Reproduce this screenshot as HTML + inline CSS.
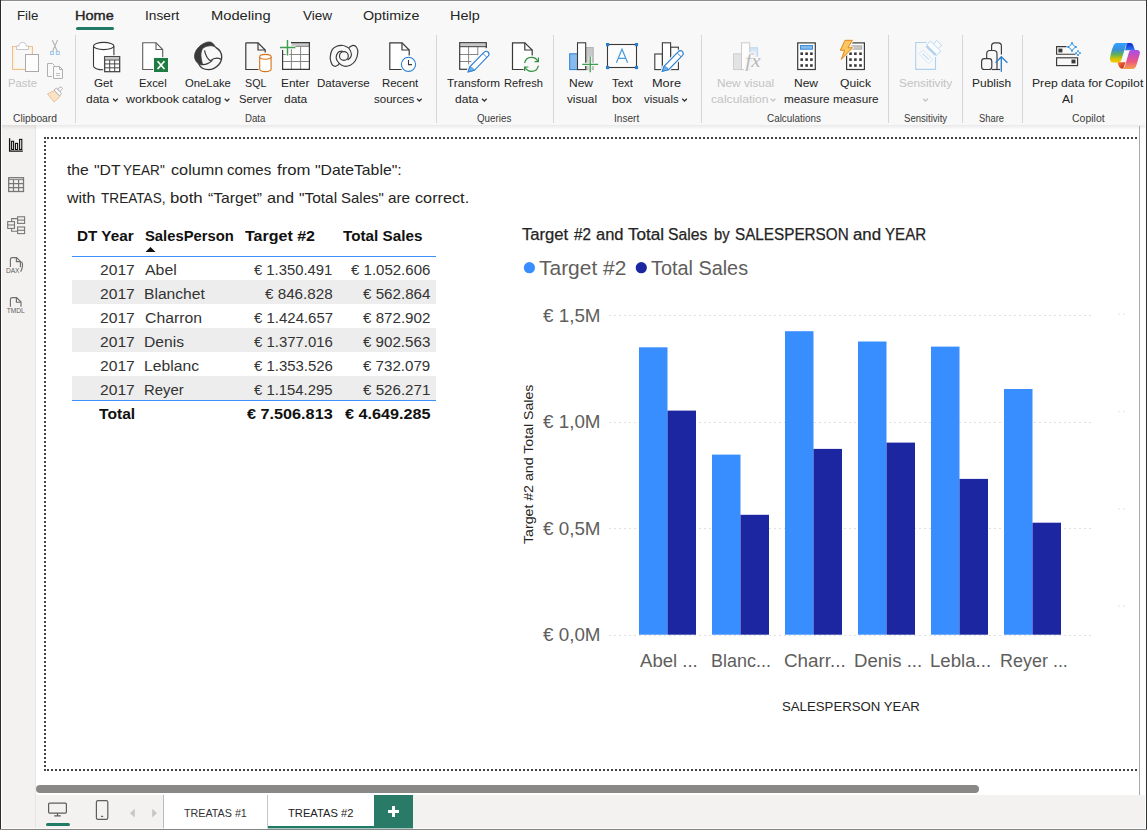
<!DOCTYPE html>
<html><head><meta charset="utf-8"><title>Power BI</title>
<style>
html,body{margin:0;padding:0;}
body{width:1147px;height:830px;overflow:hidden;position:relative;background:#fff;font-family:"Liberation Sans",sans-serif;}
.a{position:absolute;}
.t{position:absolute;white-space:pre;line-height:30px;transform-origin:0 0;font-family:"Liberation Sans",sans-serif;}
#ribbon{left:0;top:0;width:1147px;height:125px;background:#f8f8f8;}
.sep{position:absolute;top:35px;height:88px;width:1px;background:#d6d6d6;}
#nav{left:0;top:125px;width:36px;height:705px;background:#f3f2f1;}
#status{left:36px;top:795px;width:1111px;height:35px;background:#f3f2f1;}
.row{position:absolute;left:72px;width:364px;height:24px;}
.g{background:#ededed;}
.chev{position:absolute;}

</style></head>
<body>
<div id="ribbon" class="a"></div>
<div class="a" style="left:76px;top:27px;width:38px;height:3px;background:#217a66;border-radius:1.5px;"></div>
<div class="sep" style="left:75px"></div>
<div class="sep" style="left:436px"></div>
<div class="sep" style="left:553px"></div>
<div class="sep" style="left:701px"></div>
<div class="sep" style="left:888px"></div>
<div class="sep" style="left:962px"></div>
<div class="sep" style="left:1022px"></div>
<div id="nav" class="a"></div>
<div class="a" style="left:35px;top:126px;width:1px;height:704px;background:#e6e5e4;"></div>
<div id="status" class="a"></div>
<div class="a" style="left:2px;top:125px;width:1143px;height:5px;background:linear-gradient(rgba(0,0,0,0.085),rgba(0,0,0,0));"></div>
<!-- page dotted border -->
<div class="a" style="left:47px;top:137px;width:1090px;height:2px;background:repeating-linear-gradient(90deg,#444 0 2px,transparent 2px 4px);"></div>
<div class="a" style="left:47px;top:769px;width:1090px;height:2px;background:repeating-linear-gradient(90deg,#444 0 2px,transparent 2px 4px);"></div>
<div class="a" style="left:44px;top:141px;width:2px;height:626px;background:repeating-linear-gradient(180deg,#444 0 2px,transparent 2px 4px);"></div>
<div class="a" style="left:44px;top:137px;width:2px;height:2px;background:#444;"></div>
<div class="a" style="left:44px;top:769px;width:2px;height:2px;background:#444;"></div>
<div class="a" style="left:1139px;top:126px;width:1px;height:669px;background:#aaa8a6;"></div>
<!-- scrollbar -->
<div class="a" style="left:36px;top:785px;width:943px;height:8px;border-radius:4px;background:#8a8886;"></div>
<!-- page tabs -->
<div class="a" style="left:164px;top:795px;width:210px;height:34px;background:#fff;"></div>
<div class="a" style="left:163px;top:795px;width:1px;height:34px;background:#bdbbb9;"></div>
<div class="a" style="left:267px;top:795px;width:1px;height:34px;background:#c8c6c4;"></div>
<div class="a" style="left:268px;top:826px;width:106px;height:3px;background:#217a66;"></div>
<div class="a" style="left:374px;top:795px;width:39px;height:34px;background:#2a7a68;"></div>
<div class="a" style="left:388px;top:810px;width:11px;height:3px;background:#fff;"></div>
<div class="a" style="left:392px;top:806px;width:3px;height:11px;background:#fff;"></div>
<div class="a" style="left:46px;top:822.5px;width:24px;height:3px;border-radius:1.5px;background:#217a66;"></div>
<!-- table -->
<div class="a" style="left:72px;top:256px;width:364px;height:1px;background:#3a90ff;"></div>
<div class="row" style="top:257px"></div>
<div class="row g" style="top:280px"></div>
<div class="row g" style="top:328px"></div>
<div class="row g" style="top:376px"></div>
<div class="a" style="left:72px;top:400px;width:364px;height:1px;background:#3a90ff;"></div>
<svg class="a" style="left:145px;top:246px" width="12" height="7" viewBox="0 0 12 7"><path d="M0.5 6 L5.5 1 L10.5 6 Z" fill="#111"/></svg>
<!-- window borders -->
<div class="a" style="left:0;top:1px;width:1147px;height:1px;background:#fff;"></div>
<div class="a" style="left:1px;top:0;width:1px;height:830px;background:#fff;"></div>
<div class="a" style="left:1145px;top:0;width:1px;height:830px;background:#fdfdfd;"></div>
<div class="a" style="left:0;top:0;width:1147px;height:1px;background:#8c8c8c;"></div>
<div class="a" style="left:0;top:0;width:1px;height:830px;background:#2b2b2b;"></div>
<div class="a" style="left:1146px;top:0;width:1px;height:830px;background:#333;"></div>
<div class="a" style="left:2px;top:828px;width:1143px;height:1px;background:rgba(255,255,255,0.6);"></div>
<div class="a" style="left:0;top:829px;width:1147px;height:1px;background:#858585;"></div>
<svg class="a" style="left:500px;top:210px" width="640" height="540" viewBox="500 210 640 540">
<g stroke="#e0e0e0" stroke-width="1" stroke-dasharray="2 3">
<line x1="609" x2="1091" y1="315.5" y2="315.5"/>
<line x1="609" x2="1091" y1="422.5" y2="422.5"/>
<line x1="609" x2="1091" y1="528.5" y2="528.5"/>
<line x1="609" x2="1091" y1="635.5" y2="635.5"/>
</g>
<g fill="#efefef">
<rect x="1118" y="313.3" width="2" height="1.8"/><rect x="1123" y="313.3" width="2" height="1.8"/>
<rect x="1118" y="410.6" width="2" height="1.8"/><rect x="1123" y="410.6" width="2" height="1.8"/>
<rect x="1118" y="508" width="2" height="1.8"/><rect x="1123" y="508" width="2" height="1.8"/>
<rect x="1118" y="605.4" width="2" height="1.8"/><rect x="1123" y="605.4" width="2" height="1.8"/>
</g>
<g fill="#388eff">
<rect x="639" y="347.3" width="28.5" height="287.4"/>
<rect x="712" y="454.6" width="28.5" height="180.1"/>
<rect x="785" y="331.2" width="28.5" height="303.5"/>
<rect x="858" y="341.5" width="28.5" height="293.2"/>
<rect x="931" y="346.6" width="28.5" height="288.1"/>
<rect x="1004" y="389" width="28.5" height="245.7"/>
</g>
<g fill="#1c26a0">
<rect x="667.5" y="410.6" width="28.5" height="224.1"/>
<rect x="740.5" y="514.8" width="28.5" height="119.9"/>
<rect x="813.5" y="448.9" width="28.5" height="185.8"/>
<rect x="886.5" y="442.6" width="28.5" height="192.1"/>
<rect x="959.5" y="478.9" width="28.5" height="155.8"/>
<rect x="1032.5" y="522.7" width="28.5" height="112"/>
</g>
<circle cx="529.4" cy="267.7" r="5.6" fill="#388eff"/>
<circle cx="641.3" cy="267.7" r="5.6" fill="#1c26a0"/>
</svg>
<svg class="a" style="left:0;top:30px" width="1147" height="80" viewBox="0 30 1147 80" fill="none" stroke-linejoin="miter">
<defs>
<linearGradient id="cpL" x1="0" y1="43" x2="0" y2="62" gradientUnits="userSpaceOnUse"><stop offset="0" stop-color="#2ea3ff"/><stop offset="0.35" stop-color="#3a8fd8"/><stop offset="0.6" stop-color="#5fb05a"/><stop offset="0.85" stop-color="#d8c400"/><stop offset="1" stop-color="#f5c400"/></linearGradient>
<linearGradient id="cpR" x1="0" y1="50" x2="0" y2="69" gradientUnits="userSpaceOnUse"><stop offset="0" stop-color="#a84ff0"/><stop offset="0.3" stop-color="#c850b8"/><stop offset="0.6" stop-color="#ec5682"/><stop offset="1" stop-color="#f8a04a"/></linearGradient>
<linearGradient id="cpT" x1="0" y1="43" x2="0" y2="50" gradientUnits="userSpaceOnUse"><stop offset="0" stop-color="#1028c8"/><stop offset="1" stop-color="#2a78f0"/></linearGradient>
<linearGradient id="cpB" x1="1118" y1="62" x2="1124" y2="69" gradientUnits="userSpaceOnUse"><stop offset="0" stop-color="#fa7a30"/><stop offset="1" stop-color="#c8241e"/></linearGradient>
</defs>
<!-- PASTE (disabled) -->
<g>
<rect x="12.5" y="46.5" width="20" height="23" fill="#fdf1d8" stroke="#efbf93"/>
<rect x="14.5" y="48.5" width="16" height="19.5" fill="#f8f8f8" stroke="none"/>
<path d="M16.5 49.5 V46 H19 C19 43.5 20.5 42.5 22.5 42.5 C24.5 42.5 26 43.5 26 46 H28.5 V49.5 Z" fill="#fff" stroke="#c6c6c6"/>
<rect x="25.5" y="54.5" width="13" height="17" fill="#fdfdfd" stroke="#a9a9a9"/>
</g>
<!-- CUT -->
<g stroke="#b4b4b4" stroke-width="1.1">
<path d="M52.3 40 L57.2 51.2 M57.5 40 L52.6 51.2"/>
</g>
<rect x="50.5" y="51.5" width="3" height="3" fill="#e3effa" stroke="#a6c9ea"/>
<rect x="56.3" y="51.5" width="3" height="3" fill="#e3effa" stroke="#a6c9ea"/>
<!-- COPY -->
<g stroke="#b0b0b0" fill="#fafafa">
<path d="M52 76.5 H47.5 V63.5 H52.5 L54.5 65.5"/>
<path d="M53.5 66.5 H59.5 L62.5 69.5 V78.5 H53.5 Z"/>
<path d="M59.5 66.5 V69.5 H62.5" fill="none"/>
<path d="M56 73.5 H60 M56 75.5 H60" fill="none" stroke="#c0c0c0"/>
</g>
<!-- FORMAT PAINTER -->
<g>
<path d="M47.5 94 L54 102 L60 96.5 L54.5 90.5 Z" fill="#fbe3c8" stroke="#efc096"/>
<path d="M54 90 L56.5 88 L61.5 93.5 L59.5 96 Z" fill="#fafafa" stroke="#b4b4b4"/>
<path d="M57.5 89 L61 86.8 L62.5 88.5 L60 91.5 Z" fill="#fafafa" stroke="#b4b4b4"/>
</g>
<!-- GET DATA -->
<g stroke="#3b3a39" stroke-width="1.1">
<path d="M93.5 46 V66 C93.5 68 97.5 69.8 103.7 69.8 C109.9 69.8 113.9 68 113.9 66 V46" fill="#fff"/>
<ellipse cx="103.7" cy="46" rx="10.2" ry="3.6" fill="#fff"/>
</g>
<rect x="103.2" y="55.2" width="17.5" height="17.5" fill="#f8f8f8" stroke="none"/>
<rect x="104.7" y="56.7" width="15" height="15" fill="#fff" stroke="#3b3a39" stroke-width="1.2"/>
<rect x="105.3" y="57.3" width="13.8" height="2.2" fill="#c8c8c8" stroke="none"/>
<path d="M104.7 60 H119.7 M104.7 63.9 H119.7 M104.7 67.8 H119.7 M109.7 60 V71.7 M114.7 60 V71.7" stroke="#4a4948" stroke-width="1"/>
<!-- EXCEL -->
<path d="M142.7 42.8 H156 L162.7 49.5 V69.5 H142.7 Z" fill="#fff" stroke="#605e5c" stroke-width="1.1"/>
<path d="M156 42.8 V49.5 H162.7" stroke="#605e5c" stroke-width="1.1"/>
<rect x="153.2" y="57.2" width="15.6" height="15.6" fill="#f8f8f8" stroke="none"/>
<rect x="154" y="58" width="14" height="14" fill="#1e7b42" stroke="none"/>
<path d="M157.6 61.2 L164.4 69 M164.4 61.2 L157.6 69" stroke="#fff" stroke-width="1.7"/>
<!-- ONELAKE -->
<g>
<path d="M198.8 64.3 C195.5 61.5 194.3 58.5 194.5 55.8 C194.8 52 197 47.5 202.7 44 C205 42.5 207.5 41.9 209.3 41.9 C211.8 41.9 213.8 43.5 215.6 47.2 C213.5 46 211.5 45.7 210.2 45.8 C207 46 204.5 47 202.7 48.4 C201.2 51 200.8 53.5 201 55.8 C201.2 59 201.8 61.5 202.5 63.8 Z" fill="#3b3a39" stroke="#3b3a39" stroke-width="0.7"/>
<path d="M215.4 47.1 C219.5 49.5 221.7 53 221.7 56.7 C221.7 60 220.8 62.5 218.9 64.5 C216 67.8 212 69.7 208.4 69.7 C204.5 69.7 200.5 68 198.8 64.1" stroke="#3b3a39" stroke-width="1.3"/>
<path d="M204.5 50.4 C205.5 55 207.5 59 210.4 60.8 C213.5 58.2 217.5 57.5 221 59.2" stroke="#3b3a39" stroke-width="1.2"/>
<path d="M200.3 64.3 C203 64.8 205.5 64.5 207.5 63.6 C209.5 62.7 211 61.8 212.4 60.4" stroke="#3b3a39" stroke-width="1.2"/>
</g>
<!-- SQL SERVER -->
<path d="M245.8 42.8 H258 L265.2 50 V52.5 M258.5 69.5 H245.8 V42.8" fill="none" stroke="#3b3a39" stroke-width="1.2"/>
<path d="M258 42.8 V50 H265.2" stroke="#3b3a39" stroke-width="1.2"/>
<g stroke="#d9731c" stroke-width="1.1">
<path d="M259.7 56.8 V69 C259.7 70.5 262.3 71.6 265.4 71.6 C268.5 71.6 271.1 70.5 271.1 69 V56.8" fill="#fff"/>
<ellipse cx="265.4" cy="56.8" rx="5.7" ry="2.4" fill="#fff"/>
</g>
<!-- ENTER DATA -->
<rect x="282.8" y="42.8" width="26.4" height="26.4" fill="#fff" stroke="none"/>
<rect x="291.5" y="42.6" width="17.8" height="3.4" fill="#c8c8c8" stroke="none"/>
<path d="M291.4 46.4 V69.2 M300.6 46.4 V69.2 M282.8 54.5 H309.2 M282.8 61.5 H309.2 M291 46.4 H309.2" stroke="#7a7978" stroke-width="0.9"/>
<path d="M291 42.6 H309.4 V69.4 H282.6 V50" stroke="#3b3a39" stroke-width="1.2"/>
<path d="M280 47.5 H295.4 M287.5 40 V55.4" stroke="#f8f8f8" stroke-width="3.4"/>
<path d="M280 47.5 H295.4 M287.5 40 V55.4" stroke="#3f9e4d" stroke-width="1.4"/>
<!-- DATAVERSE -->
<g stroke="#3b3a39" stroke-width="1.15">
<path d="M339.3 63.3 C339.0 63.6 338.4 64.8 337.8 65.3 C337.1 65.7 336.1 66.3 335.3 66.3 C334.4 66.3 333.5 66.0 332.7 65.3 C332.0 64.5 331.4 63.3 331.0 62.0 C330.6 60.7 330.0 59.4 330.2 57.3 C330.4 55.3 331.1 51.5 332.2 49.6 C333.3 47.8 335.3 46.9 336.8 46.2 C338.3 45.4 339.9 45.3 341.4 45.3 C343.0 45.4 344.8 45.9 346.0 46.5 C347.3 47.0 348.2 47.2 349.1 48.5 C350.0 49.8 351.3 52.7 351.4 54.3 C351.6 55.8 350.9 56.8 350.3 57.7 C349.6 58.7 348.0 59.7 347.6 60.0"/>
<path d="M348.7 47.7 C349.5 47.3 351.7 45.5 353.0 45.4 C354.3 45.3 355.7 46.1 356.5 47.3 C357.3 48.5 358.0 50.5 357.8 52.7 C357.6 55.0 356.5 58.8 355.3 60.8 C354.1 62.9 352.3 64.1 350.7 65.1 C349.0 66.0 346.8 66.4 345.3 66.4 C343.7 66.4 342.4 65.6 341.4 65.1 C340.4 64.5 339.9 64.0 339.1 63.1 C338.3 62.3 337.3 61.1 336.8 60.0 C336.3 59.0 336.1 58.1 336.2 57.0 C336.3 55.8 337.0 54.0 337.6 53.1 C338.2 52.2 339.0 51.7 339.9 51.4 C340.7 51.0 342.1 51.1 342.6 51.0"/>
<circle cx="343.9" cy="56" r="4.4"/>
</g>
<!-- RECENT SOURCES -->
<path d="M401.5 69.5 H389.8 V42.8 H402 L409.2 50 V55.5" stroke="#3b3a39" stroke-width="1.2" fill="#fff"/>
<path d="M402 42.8 V50 H409.2" stroke="#3b3a39" stroke-width="1.2"/>
<circle cx="408.5" cy="64.3" r="7.1" fill="#fff" stroke="#2b7fcf" stroke-width="1.1"/>
<path d="M408.5 60 V64.6 H412" stroke="#3b3a39" stroke-width="1.1"/>
<!-- TRANSFORM DATA -->
<rect x="459.8" y="42.8" width="26.4" height="26.4" fill="#fff" stroke="none"/>
<rect x="460.3" y="43.4" width="25.6" height="2.9" fill="#c8c8c8" stroke="none"/>
<path d="M468.6 46.8 V69.2 M477.8 46.8 V69.2 M459.8 54.5 H486.2 M459.8 61.5 H486.2" stroke="#7a7978" stroke-width="0.9"/>
<path d="M459.7 46.7 H486.3" stroke="#3b3a39" stroke-width="1"/>
<rect x="459.7" y="42.7" width="26.6" height="26.6" stroke="#3b3a39" stroke-width="1.2"/>
<g>
<path d="M466 73.8 L468.4 64.6 L483.2 49.6 L486.5 48 L491.5 50 V74.5 Z" fill="#f8f8f8" stroke="none"/>
<path d="M468.1 71.9 L469.8 66.9 L484.2 52.2 C485.3 51 487 50.9 488.1 52 C489.2 53.1 489.3 54.7 488.3 55.9 L474.4 70.3 Z" fill="#fff" stroke="#2b7fcf" stroke-width="1.1"/>
<path d="M468.1 71.9 L469.8 66.9 C471.6 67.1 473.9 68.6 474.4 70.3 Z" fill="#6db0ec" stroke="#2b7fcf" stroke-width="0.8"/>
<path d="M483 53.6 L486.8 57.2" stroke="#2b7fcf" stroke-width="0.9"/>
</g>
<!-- REFRESH -->
<path d="M523.5 69.5 H512.5 V42.8 H524.8 L532.2 50 V55.5" stroke="#3b3a39" stroke-width="1.2" fill="#fff"/>
<path d="M524.8 42.8 V50 H532.2" stroke="#3b3a39" stroke-width="1.2"/>
<circle cx="531.5" cy="64.3" r="8.6" fill="#f8f8f8" stroke="none"/>
<g stroke="#2f8f3e" stroke-width="1.2">
<path d="M524.6 63 C525.3 59.5 528.2 57.3 531.5 57.3 C534.3 57.3 536.7 58.8 537.9 61.4"/>
<path d="M534.6 61.6 H538.4 V57.6"/>
<path d="M538.4 65.6 C537.7 69.1 534.8 71.3 531.5 71.3 C528.7 71.3 526.3 69.8 525.1 67.2"/>
<path d="M528.4 67 H524.6 V71"/>
</g>
<!-- NEW VISUAL -->
<rect x="569.7" y="53.8" width="7.8" height="15.8" fill="#86bbf0" stroke="#2b7fcf" stroke-width="1"/>
<rect x="585.6" y="47.6" width="7.6" height="22" fill="#c8c8c8" stroke="#b0b0b0" stroke-width="1"/>
<rect x="577.5" y="42.8" width="8.2" height="26.8" fill="#fff" stroke="#3b3a39" stroke-width="1.1"/>
<path d="M582.2 64.3 H598.1 M590.2 56.6 V72.2" stroke="#f8f8f8" stroke-width="3.2"/>
<path d="M582.2 64.3 H598.1 M590.2 56.6 V72.2" stroke="#3f9e4d" stroke-width="1.3"/>
<!-- TEXT BOX -->
<rect x="607.5" y="44.5" width="29" height="23" fill="#fcfcfc" stroke="#3b3a39" stroke-width="1.1"/>
<g fill="#2b7fcf" stroke="none">
<rect x="606" y="43" width="3.2" height="3.2"/><rect x="634.9" y="43" width="3.2" height="3.2"/>
<rect x="606" y="65.9" width="3.2" height="3.2"/><rect x="634.9" y="65.9" width="3.2" height="3.2"/>
</g>
<path d="M616.4 62.8 L622 49.2 L627.6 62.8 M618.3 58.3 H625.7" stroke="#4a9be0" stroke-width="1.2"/>
<!-- MORE VISUALS -->
<rect x="654.8" y="54" width="7.6" height="15.6" fill="#fff" stroke="#3b3a39" stroke-width="1.1"/>
<rect x="670.6" y="47.2" width="7.8" height="22.4" fill="#fff" stroke="#3b3a39" stroke-width="1.1"/>
<rect x="662.4" y="42.8" width="8.2" height="26.8" fill="#fff" stroke="#3b3a39" stroke-width="1.1"/>
<g>
<path d="M 662.3 71.3 L 664.0 66.3 L 678.4 51.6 C 679.5 50.4 681.2 50.3 682.3 51.4 C 683.4 52.5 683.5 54.1 682.5 55.3 L 668.6 69.7 Z" fill="#f8f8f8" stroke="#f8f8f8" stroke-width="3.4"/>
<path d="M 662.3 71.3 L 664.0 66.3 L 678.4 51.6 C 679.5 50.4 681.2 50.3 682.3 51.4 C 683.4 52.5 683.5 54.1 682.5 55.3 L 668.6 69.7 Z" fill="#fff" stroke="#2b7fcf" stroke-width="1.1"/>
<path d="M 662.3 71.3 L 664.0 66.3 C 665.8 66.5 668.1 68.0 668.6 69.7 Z" fill="#6db0ec" stroke="#2b7fcf" stroke-width="0.8"/>
<path d="M 677.2 53.0 L 681.0 56.6" stroke="#2b7fcf" stroke-width="0.9"/>
</g>
<!-- NEW VISUAL CALC (disabled) -->
<rect x="749.8" y="47.8" width="7.8" height="13" fill="#d6e7f8" stroke="#bcd6f1" stroke-width="1"/>
<rect x="733.5" y="53.8" width="8" height="15.8" fill="#e3e3e3" stroke="#cfcfcf" stroke-width="1"/>
<rect x="741.5" y="42.8" width="8.2" height="26.8" fill="#fdfdfd" stroke="#cccccc" stroke-width="1"/>
<text x="745.4" y="66.6" font-family="Liberation Serif" font-style="italic" font-size="18" fill="#f8f8f8" stroke="#f8f8f8" stroke-width="3" stroke-linejoin="round" textLength="15.2" lengthAdjust="spacingAndGlyphs">fx</text>
<text x="745.4" y="66.6" font-family="Liberation Serif" font-style="italic" font-size="18" fill="#b9b9b9" stroke="none" textLength="15.2" lengthAdjust="spacingAndGlyphs">fx</text>
<!-- NEW MEASURE -->
<rect x="797.7" y="42.9" width="17.6" height="26.6" fill="#fff" stroke="#3b3a39" stroke-width="1.2"/>
<rect x="800.4" y="45.6" width="12.2" height="3.6" fill="#86bbf0" stroke="#2b7fcf" stroke-width="0.9"/>
<g fill="#3b3a39" stroke="none">
<rect x="800.4" y="52.4" width="2.6" height="2.6"/><rect x="805.3" y="52.4" width="2.6" height="2.6"/><rect x="810.1" y="52.4" width="2.6" height="2.6"/>
<rect x="800.4" y="58.3" width="2.6" height="2.6"/><rect x="805.3" y="58.3" width="2.6" height="2.6"/><rect x="810.1" y="58.3" width="2.6" height="2.6"/>
<rect x="800.4" y="64.2" width="2.6" height="2.6"/><rect x="805.3" y="64.2" width="2.6" height="2.6"/><rect x="810.1" y="64.2" width="2.6" height="2.6"/>
</g>
<!-- QUICK MEASURE -->
<rect x="846.6" y="42.9" width="17.8" height="26.6" fill="#fff" stroke="#3b3a39" stroke-width="1.2"/>
<rect x="851.8" y="45.8" width="10" height="3.4" fill="#c8c8c8" stroke="#a0a0a0" stroke-width="0.8"/>
<g fill="#3b3a39" stroke="none">
<rect x="849.2" y="52.4" width="2.6" height="2.6"/><rect x="854.1" y="52.4" width="2.6" height="2.6"/><rect x="859.2" y="52.4" width="2.6" height="2.6"/>
<rect x="849.2" y="58.3" width="2.6" height="2.6"/><rect x="854.1" y="58.3" width="2.6" height="2.6"/><rect x="859.2" y="58.3" width="2.6" height="2.6"/>
<rect x="849.2" y="64.2" width="2.6" height="2.6"/><rect x="854.1" y="64.2" width="2.6" height="2.6"/><rect x="859.2" y="64.2" width="2.6" height="2.6"/>
</g>
<path d="M845 40.3 H852.4 L848 47.7 H852.6 L841.3 59.4 L844.6 50.3 H840.3 Z" fill="#f8f8f8" stroke="#f8f8f8" stroke-width="2.6" stroke-linejoin="round"/>
<path d="M845 40.3 H852.4 L848 47.7 H852.6 L841.3 59.4 L844.6 50.3 H840.3 Z" fill="#f9c660" stroke="#e3871c" stroke-width="1" stroke-linejoin="round"/>
<!-- SENSITIVITY (disabled) -->
<g stroke="#b0d2ef" stroke-width="1.1">
<path d="M926.6 42.5 H915.7 V69.4 H935.5 V57.1"/>
<path d="M919.2 53.7 L922.6 50.1 L932.7 59.7 L928.5 63.3 Z" stroke="#cfe3f6" stroke-width="0.9" fill="#fbfcfd"/>
<path d="M922.5 53.6 L929 59.6" stroke="#b9d7f1" stroke-width="1.2"/>
<path d="M934 43.8 L936.6 40.3 L941.7 45.4 L938.6 48" fill="#fbfcfd" stroke-width="0.9"/>
<path d="M926.7 45.2 L930.4 41 L940.9 51.2 L936 55.6 Z" fill="#fbfcfd" stroke-width="0.9"/>
<path d="M926.5 46.2 L935.6 54.9" stroke-width="2.4"/>
</g>
<!-- PUBLISH -->
<g stroke="#3b3a39" stroke-width="1.15" fill="#f8f8f8">
<path d="M1001.4 54.5 V46 C1001.4 44.2 1000 42.8 998.2 42.8 H994.8 C993 42.8 991.6 44.2 991.6 46 V50.5"/>
<path d="M997 69.5 V53.7 C997 51.9 995.6 50.5 993.8 50.5 H989.9 C988.1 50.5 986.7 51.9 986.7 53.7 V58.5"/>
<rect x="981.6" y="58.6" width="10.2" height="10.9" rx="2.8"/>
<path d="M991.8 69.5 H1000"/>
</g>
<path d="M1001.3 71.8 V57 M995.6 62.8 L1001.3 56.8 L1007.4 62.8" stroke="#3280c8" stroke-width="1.4"/>
<!-- PREP DATA FOR AI -->
<g stroke="#3b3a39" stroke-width="1.15">
<path d="M1066.5 46.6 H1056.6 V54.2 H1075.5"/>
<rect x="1056.6" y="57.8" width="21" height="7.8"/>
</g>
<rect x="1058.4" y="48.6" width="4" height="3.8" fill="#3b3a39"/>
<rect x="1071.5" y="59.6" width="4" height="3.8" fill="#3b3a39"/>
<g stroke="#2b8fe0" stroke-width="1" fill="#f8f8f8">
<path d="M1072 42.2 C1072.6 45 1074 46.4 1076.8 47 C1074 47.6 1072.6 49 1072 51.8 C1071.4 49 1070 47.6 1067.2 47 C1070 46.4 1071.4 45 1072 42.2 Z"/>
<path d="M1078 50.3 C1078.4 52 1079.1 52.7 1080.8 53.1 C1079.1 53.5 1078.4 54.2 1078 55.9 C1077.6 54.2 1076.9 53.5 1075.2 53.1 C1076.9 52.7 1077.6 52 1078 50.3 Z"/>
</g>
<!-- COPILOT -->
<g stroke="none">
<path d="M1127 43 H1130.5 C1132 43 1132.8 44 1133.3 45.5 L1135 50.2 H1125 Z" fill="url(#cpT)"/>
<path d="M1117.5 62.3 H1125.5 L1123.6 67.5 C1123.2 68.6 1122.2 69 1121.2 68.6 C1119.8 68 1119 66.8 1118.6 65.5 Z" fill="url(#cpB)"/>
<path d="M1116.5 43 H1128.6 C1126.9 43.2 1126.2 44.4 1125.7 46 L1121.5 59.6 C1120.9 61.5 1119.8 62.5 1117.8 62.5 H1113.2 C1110.9 62.5 1109.7 61 1110 58.6 C1110.5 54 1112 48.5 1113.6 45.4 C1114.3 44 1115.2 43 1116.5 43 Z" fill="url(#cpL)"/>
<path d="M1131.5 50 H1137 C1139.4 50 1140.4 52 1139.7 54.2 L1136.4 65.2 C1135.8 67.4 1134.2 68.9 1132.2 68.9 H1122 C1123.6 68.7 1124.4 67.5 1124.9 66 L1128.8 52.8 C1129.3 51.2 1130 50 1131.5 50 Z" fill="url(#cpR)"/>
</g>
</svg>
<svg class="a" style="left:0;top:90px" width="1147" height="20" viewBox="0 90 1147 20" fill="none" stroke-width="1.25">
<path d="M113.1 98.7 L115.45 101.05 L117.8 98.7" stroke="#333"/>
<path d="M224.7 98.7 L227.05 101.05 L229.4 98.7" stroke="#333"/>
<path d="M417.0 98.7 L419.35 101.05 L421.7 98.7" stroke="#333"/>
<path d="M482.0 98.7 L484.35 101.05 L486.7 98.7" stroke="#333"/>
<path d="M682.2 98.7 L684.55 101.05 L686.9 98.7" stroke="#333"/>
<path d="M770.7 98.7 L773.05 101.05 L775.4 98.7" stroke="#c3c3c3"/>
<path d="M923.2 98.7 L925.55 101.05 L927.9 98.7" stroke="#c3c3c3"/>
</svg>
<svg class="a" style="left:0;top:130px" width="36" height="200" viewBox="0 130 36 200" fill="none">
<!-- report -->
<g stroke="#111" stroke-width="1.1">
<path d="M9.6 138.2 V151.1 H22.8" stroke-width="1.3"/>
<rect x="11.6" y="141.3" width="2" height="8.2"/>
<rect x="15.5" y="143.4" width="2.1" height="6.1"/>
<rect x="19.6" y="139.4" width="2.2" height="10.1"/>
</g>
<!-- table -->
<g stroke="#787776" stroke-width="1.3">
<rect x="8.7" y="177.7" width="14.8" height="13.8"/>
<path d="M8.7 179.6 H23.5" stroke-width="0.9"/>
<path d="M13.5 180 V191.5 M18.6 180 V191.5 M8.7 183.7 H23.5 M8.7 187.6 H23.5" stroke-width="1.2"/>
</g>
<!-- model -->
<g stroke="#787776" stroke-width="1.1">
<rect x="7.7" y="221.6" width="6.8" height="6.8"/><path d="M7.7 225 H14.5"/>
<rect x="17.6" y="216.8" width="7" height="6.6"/><path d="M17.6 220.1 H24.6"/>
<rect x="17.6" y="227" width="7" height="6.6"/><path d="M17.6 230.3 H24.6"/>
<path d="M11.6 221.6 V218.6 H17.6 M11.6 228.4 V231.3 H17.6"/>
</g>
<!-- DAX -->
<g stroke="#6e6d6c" stroke-width="1.15">
<path d="M10.4 267 V259.4 C10.4 258.3 11.2 257.6 12.2 257.6 H16.6 L20.4 261.4 V267.2"/>
<path d="M16.4 257.8 V261.6 H20.2"/>
<path d="M21.6 261.5 C22.8 264 22.8 268 20.6 271.6"/>
</g>
<text x="5.9" y="272.8" font-family="Liberation Sans" font-size="6.4" fill="#5e5d5c" textLength="13.6" lengthAdjust="spacingAndGlyphs">DAX</text>
<!-- TMDL -->
<g stroke="#6e6d6c" stroke-width="1.15">
<path d="M10.4 306.8 V299.4 C10.4 298.3 11.2 297.6 12.2 297.6 H16.6 L21 302 V306.8"/>
<path d="M16.4 297.8 V302.2 H20.8"/>
</g>
<text x="6.8" y="312.8" font-family="Liberation Sans" font-size="6.6" fill="#5e5d5c" textLength="18" lengthAdjust="spacingAndGlyphs">TMDL</text>
</svg>
<svg class="a" style="left:40px;top:795px" width="130" height="34" viewBox="40 795 130 34" fill="none">
<g stroke="#5e5d5c" stroke-width="1.2">
<rect x="48.6" y="803.1" width="17.8" height="10" rx="1"/>
<path d="M57.5 813.1 V815.6 M54.2 815.8 H60.8"/>
</g>
<g stroke="#5e5d5c" stroke-width="1.2">
<rect x="96.4" y="800.6" width="11.4" height="18.8" rx="1.6"/>
<path d="M101 816.4 H103.2"/>
</g>
<path d="M134.8 808.8 L130 813.2 L134.8 817.6 Z" fill="#c8c6c4"/>
<path d="M152.2 808.8 L157 813.2 L152.2 817.6 Z" fill="#c8c6c4"/>
</svg>
<div id="txt">
<span class="t" style="left:17.40px;top:1.00px;font-size:13.5px;color:#242424;transform:scaleX(0.9846);">File</span>
<span class="t" style="left:75.11px;top:1.00px;font-size:13.5px;color:#242424;transform:scaleX(1.0751);-webkit-text-stroke:0.38px #242424;">Home</span>
<span class="t" style="left:144.96px;top:1.00px;font-size:13.5px;color:#242424;transform:scaleX(1.0159);">Insert</span>
<span class="t" style="left:210.88px;top:1.00px;font-size:13.5px;color:#242424;transform:scaleX(1.0885);">Modeling</span>
<span class="t" style="left:302.59px;top:1.00px;font-size:13.5px;color:#242424;transform:scaleX(1.0046);">View</span>
<span class="t" style="left:363.27px;top:1.00px;font-size:13.5px;color:#242424;transform:scaleX(1.0573);">Optimize</span>
<span class="t" style="left:449.84px;top:1.00px;font-size:13.5px;color:#242424;transform:scaleX(1.0677);">Help</span>
<span class="t" style="left:8.09px;top:68.00px;font-size:11.5px;color:#c3c3c3;transform:scaleX(0.9836);">Paste</span>
<span class="t" style="left:94.04px;top:68.00px;font-size:11.5px;color:#242424;transform:scaleX(1.0124);">Get</span>
<span class="t" style="left:86.06px;top:84.00px;font-size:11.5px;color:#242424;transform:scaleX(1.0384);">data</span>
<span class="t" style="left:138.63px;top:68.00px;font-size:11.5px;color:#242424;transform:scaleX(0.9835);">Excel</span>
<span class="t" style="left:125.74px;top:84.00px;font-size:11.5px;color:#242424;transform:scaleX(1.0759);">workbook</span>
<span class="t" style="left:184.56px;top:68.00px;font-size:11.5px;color:#242424;transform:scaleX(0.9822);">OneLake</span>
<span class="t" style="left:182.18px;top:84.00px;font-size:11.5px;color:#242424;transform:scaleX(1.0554);">catalog</span>
<span class="t" style="left:245.20px;top:68.00px;font-size:11.5px;color:#242424;transform:scaleX(0.9303);">SQL</span>
<span class="t" style="left:239.11px;top:84.00px;font-size:11.5px;color:#242424;transform:scaleX(0.9749);">Server</span>
<span class="t" style="left:281.47px;top:68.00px;font-size:11.5px;color:#242424;transform:scaleX(1.0315);">Enter</span>
<span class="t" style="left:283.87px;top:84.00px;font-size:11.5px;color:#242424;transform:scaleX(1.0390);">data</span>
<span class="t" style="left:317.28px;top:68.00px;font-size:11.5px;color:#242424;transform:scaleX(1.0071);">Dataverse</span>
<span class="t" style="left:382.01px;top:68.00px;font-size:11.5px;color:#242424;transform:scaleX(0.9946);">Recent</span>
<span class="t" style="left:373.53px;top:84.00px;font-size:11.5px;color:#242424;transform:scaleX(1.0021);">sources</span>
<span class="t" style="left:447.06px;top:68.00px;font-size:11.5px;color:#242424;transform:scaleX(1.0215);">Transform</span>
<span class="t" style="left:455.27px;top:84.00px;font-size:11.5px;color:#242424;transform:scaleX(1.0460);">data</span>
<span class="t" style="left:503.63px;top:68.00px;font-size:11.5px;color:#242424;transform:scaleX(0.9667);">Refresh</span>
<span class="t" style="left:569.28px;top:68.00px;font-size:11.5px;color:#242424;transform:scaleX(1.0449);">New</span>
<span class="t" style="left:566.72px;top:84.00px;font-size:11.5px;color:#242424;transform:scaleX(1.0201);">visual</span>
<span class="t" style="left:611.62px;top:68.00px;font-size:11.5px;color:#242424;transform:scaleX(0.9915);">Text</span>
<span class="t" style="left:612.25px;top:84.00px;font-size:11.5px;color:#242424;transform:scaleX(1.0698);">box</span>
<span class="t" style="left:652.23px;top:68.00px;font-size:11.5px;color:#242424;transform:scaleX(1.1091);">More</span>
<span class="t" style="left:644.18px;top:84.00px;font-size:11.5px;color:#242424;transform:scaleX(0.9836);">visuals</span>
<span class="t" style="left:716.90px;top:68.00px;font-size:11.5px;color:#c3c3c3;transform:scaleX(1.0270);">New visual</span>
<span class="t" style="left:710.52px;top:84.00px;font-size:11.5px;color:#c3c3c3;transform:scaleX(1.0602);">calculation</span>
<span class="t" style="left:793.87px;top:68.00px;font-size:11.5px;color:#242424;transform:scaleX(1.0432);">New</span>
<span class="t" style="left:784.25px;top:84.00px;font-size:11.5px;color:#242424;transform:scaleX(1.0195);">measure</span>
<span class="t" style="left:840.45px;top:68.00px;font-size:11.5px;color:#242424;transform:scaleX(1.0532);">Quick</span>
<span class="t" style="left:832.61px;top:84.00px;font-size:11.5px;color:#242424;transform:scaleX(1.0201);">measure</span>
<span class="t" style="left:898.97px;top:68.00px;font-size:11.5px;color:#c3c3c3;transform:scaleX(1.0295);">Sensitivity</span>
<span class="t" style="left:971.99px;top:68.00px;font-size:11.5px;color:#242424;transform:scaleX(1.0400);">Publish</span>
<span class="t" style="left:1031.57px;top:68.00px;font-size:11.5px;color:#242424;transform:scaleX(1.0577);">Prep data for</span>
<span class="t" style="left:1062.29px;top:84.00px;font-size:11.5px;color:#242424;transform:scaleX(1.0591);">AI</span>
<span class="t" style="left:1105.24px;top:68.00px;font-size:11.5px;color:#242424;transform:scaleX(1.0704);">Copilot</span>
<span class="t" style="left:12.75px;top:104.00px;font-size:10px;color:#3b3a39;transform:scaleX(1.0266);">Clipboard</span>
<span class="t" style="left:245.08px;top:104.00px;font-size:10px;color:#3b3a39;transform:scaleX(0.9654);">Data</span>
<span class="t" style="left:477.07px;top:104.00px;font-size:10px;color:#3b3a39;transform:scaleX(0.9800);">Queries</span>
<span class="t" style="left:614.41px;top:104.00px;font-size:10px;color:#3b3a39;transform:scaleX(1.0105);">Insert</span>
<span class="t" style="left:767.34px;top:104.00px;font-size:10px;color:#3b3a39;transform:scaleX(0.9886);">Calculations</span>
<span class="t" style="left:904.18px;top:104.00px;font-size:10px;color:#3b3a39;transform:scaleX(0.9580);">Sensitivity</span>
<span class="t" style="left:978.87px;top:104.00px;font-size:10px;color:#3b3a39;transform:scaleX(0.9351);">Share</span>
<span class="t" style="left:1072.10px;top:104.00px;font-size:10px;color:#3b3a39;transform:scaleX(1.0481);">Copilot</span>
<span class="t" style="left:66.71px;top:155.00px;font-size:15px;color:#252423;transform:scaleX(1.0449);">the</span>
<span class="t" style="left:94.24px;top:155.00px;font-size:15px;color:#252423;transform:scaleX(1.0481);">"DT</span>
<span class="t" style="left:123.09px;top:155.00px;font-size:15px;color:#252423;transform:scaleX(0.9028);">YEAR"</span>
<span class="t" style="left:170.54px;top:155.00px;font-size:15px;color:#252423;transform:scaleX(1.0822);">column</span>
<span class="t" style="left:227.41px;top:155.00px;font-size:15px;color:#252423;transform:scaleX(0.9992);">comes</span>
<span class="t" style="left:277.07px;top:155.00px;font-size:15px;color:#252423;transform:scaleX(1.1152);">from</span>
<span class="t" style="left:314.75px;top:155.00px;font-size:15px;color:#252423;transform:scaleX(1.0522);">"DateTable":</span>
<span class="t" style="left:67.16px;top:183.00px;font-size:15px;color:#252423;transform:scaleX(1.0629);">with</span>
<span class="t" style="left:101.16px;top:183.00px;font-size:15px;color:#252423;transform:scaleX(0.9076);">TREATAS,</span>
<span class="t" style="left:169.58px;top:183.00px;font-size:15px;color:#252423;transform:scaleX(1.1192);">both</span>
<span class="t" style="left:208.03px;top:183.00px;font-size:15px;color:#252423;transform:scaleX(1.0457);">“Target”</span>
<span class="t" style="left:266.99px;top:183.00px;font-size:15px;color:#252423;transform:scaleX(1.0847);">and</span>
<span class="t" style="left:299.16px;top:183.00px;font-size:15px;color:#252423;transform:scaleX(1.0305);">"Total</span>
<span class="t" style="left:340.78px;top:183.00px;font-size:15px;color:#252423;transform:scaleX(0.9975);">Sales"</span>
<span class="t" style="left:388.22px;top:183.00px;font-size:15px;color:#252423;transform:scaleX(1.0212);">are</span>
<span class="t" style="left:414.99px;top:183.00px;font-size:15px;color:#252423;transform:scaleX(1.0826);">correct.</span>
<span class="t" style="left:77.31px;top:221.00px;font-size:15.3px;color:#111;transform:scaleX(0.9978);font-weight:bold;">DT Year</span>
<span class="t" style="left:145.14px;top:221.00px;font-size:15.3px;color:#111;transform:scaleX(0.9674);font-weight:bold;">SalesPerson</span>
<span class="t" style="left:245.35px;top:221.00px;font-size:15.3px;color:#111;transform:scaleX(1.0468);font-weight:bold;">Target #2</span>
<span class="t" style="left:343.36px;top:221.00px;font-size:15.3px;color:#111;transform:scaleX(0.9966);font-weight:bold;">Total Sales</span>
<span class="t" style="left:99.53px;top:255.00px;font-size:15.3px;color:#333;transform:scaleX(1.0214);">2017</span>
<span class="t" style="left:145.06px;top:255.00px;font-size:15.3px;color:#333;transform:scaleX(1.0384);">Abel</span>
<span class="t" style="left:253.74px;top:255.00px;font-size:15.3px;color:#333;transform:scaleX(0.9691);">€ 1.350.491</span>
<span class="t" style="left:351.12px;top:255.00px;font-size:15.3px;color:#333;transform:scaleX(0.9820);">€ 1.052.606</span>
<span class="t" style="left:99.53px;top:279.00px;font-size:15.3px;color:#333;transform:scaleX(1.0214);">2017</span>
<span class="t" style="left:144.01px;top:279.00px;font-size:15.3px;color:#333;transform:scaleX(1.0213);">Blanchet</span>
<span class="t" style="left:264.93px;top:279.00px;font-size:15.3px;color:#333;transform:scaleX(0.9948);">€ 846.828</span>
<span class="t" style="left:362.72px;top:279.00px;font-size:15.3px;color:#333;transform:scaleX(0.9914);">€ 562.864</span>
<span class="t" style="left:100.16px;top:303.00px;font-size:15.3px;color:#333;transform:scaleX(1.0235);">2017</span>
<span class="t" style="left:144.59px;top:303.00px;font-size:15.3px;color:#333;transform:scaleX(1.0301);">Charron</span>
<span class="t" style="left:253.74px;top:303.00px;font-size:15.3px;color:#333;transform:scaleX(0.9789);">€ 1.424.657</span>
<span class="t" style="left:363.21px;top:303.00px;font-size:15.3px;color:#333;transform:scaleX(0.9899);">€ 872.902</span>
<span class="t" style="left:99.53px;top:327.00px;font-size:15.3px;color:#333;transform:scaleX(1.0214);">2017</span>
<span class="t" style="left:143.98px;top:327.00px;font-size:15.3px;color:#333;transform:scaleX(1.0228);">Denis</span>
<span class="t" style="left:253.74px;top:327.00px;font-size:15.3px;color:#333;transform:scaleX(0.9765);">€ 1.377.016</span>
<span class="t" style="left:362.86px;top:327.00px;font-size:15.3px;color:#333;transform:scaleX(0.9890);">€ 902.563</span>
<span class="t" style="left:99.59px;top:351.00px;font-size:15.3px;color:#333;transform:scaleX(1.0235);">2017</span>
<span class="t" style="left:144.38px;top:351.00px;font-size:15.3px;color:#333;transform:scaleX(1.0259);">Leblanc</span>
<span class="t" style="left:253.74px;top:351.00px;font-size:15.3px;color:#333;transform:scaleX(0.9765);">€ 1.353.526</span>
<span class="t" style="left:363.21px;top:351.00px;font-size:15.3px;color:#333;transform:scaleX(0.9881);">€ 732.079</span>
<span class="t" style="left:99.53px;top:375.00px;font-size:15.3px;color:#333;transform:scaleX(1.0214);">2017</span>
<span class="t" style="left:144.49px;top:375.00px;font-size:15.3px;color:#333;transform:scaleX(0.9724);">Reyer</span>
<span class="t" style="left:253.74px;top:375.00px;font-size:15.3px;color:#333;transform:scaleX(0.9720);">€ 1.154.295</span>
<span class="t" style="left:362.86px;top:375.00px;font-size:15.3px;color:#333;transform:scaleX(0.9899);">€ 526.271</span>
<span class="t" style="left:99.03px;top:399.00px;font-size:15.3px;color:#111;transform:scaleX(1.0213);font-weight:bold;">Total</span>
<span class="t" style="left:246.98px;top:399.00px;font-size:15.3px;color:#111;transform:scaleX(1.0603);font-weight:bold;">€ 7.506.813</span>
<span class="t" style="left:344.98px;top:399.00px;font-size:15.3px;color:#111;transform:scaleX(1.0589);font-weight:bold;">€ 4.649.285</span>
<span class="t" style="left:521.78px;top:220.00px;font-size:16px;color:#252423;transform:scaleX(1.0388);-webkit-text-stroke:0.25px #252423;">Target</span>
<span class="t" style="left:574.34px;top:220.00px;font-size:16px;color:#252423;transform:scaleX(0.9509);-webkit-text-stroke:0.25px #252423;">#2</span>
<span class="t" style="left:595.89px;top:220.00px;font-size:16px;color:#252423;transform:scaleX(1.0308);-webkit-text-stroke:0.25px #252423;">and</span>
<span class="t" style="left:628.06px;top:220.00px;font-size:16px;color:#252423;transform:scaleX(1.0701);-webkit-text-stroke:0.25px #252423;">Total</span>
<span class="t" style="left:668.07px;top:220.00px;font-size:16px;color:#252423;transform:scaleX(0.9804);-webkit-text-stroke:0.25px #252423;">Sales</span>
<span class="t" style="left:714.12px;top:220.00px;font-size:16px;color:#252423;transform:scaleX(0.9225);-webkit-text-stroke:0.25px #252423;">by</span>
<span class="t" style="left:735.43px;top:220.00px;font-size:16px;color:#252423;transform:scaleX(0.9540);-webkit-text-stroke:0.25px #252423;">SALESPERSON</span>
<span class="t" style="left:853.02px;top:220.00px;font-size:16px;color:#252423;transform:scaleX(1.0498);-webkit-text-stroke:0.25px #252423;">and</span>
<span class="t" style="left:885.15px;top:220.00px;font-size:16px;color:#252423;transform:scaleX(0.9431);-webkit-text-stroke:0.25px #252423;">YEAR</span>
<span class="t" style="left:539.14px;top:253.00px;font-size:20.5px;color:#605e5c;transform:scaleX(1.0223);">Target #2</span>
<span class="t" style="left:651.25px;top:253.00px;font-size:20.5px;color:#605e5c;transform:scaleX(0.9678);">Total Sales</span>
<span class="t" style="left:542.64px;top:301.00px;font-size:17.5px;color:#605e5c;transform:scaleX(1.0754);">€ 1,5M</span>
<span class="t" style="left:542.67px;top:407.00px;font-size:17.5px;color:#605e5c;transform:scaleX(1.0756);">€ 1,0M</span>
<span class="t" style="left:542.67px;top:514.00px;font-size:17.5px;color:#605e5c;transform:scaleX(1.0753);">€ 0,5M</span>
<span class="t" style="left:542.77px;top:620.00px;font-size:17.5px;color:#605e5c;transform:scaleX(1.0750);">€ 0,0M</span>
<span class="t" style="left:639.81px;top:646.00px;font-size:17.5px;color:#605e5c;transform:scaleX(1.0603);">Abel ...</span>
<span class="t" style="left:711.11px;top:646.00px;font-size:17.5px;color:#605e5c;transform:scaleX(1.0265);">Blanc...</span>
<span class="t" style="left:784.23px;top:646.00px;font-size:17.5px;color:#605e5c;transform:scaleX(1.0771);">Charr...</span>
<span class="t" style="left:853.81px;top:646.00px;font-size:17.5px;color:#605e5c;transform:scaleX(1.0615);">Denis ...</span>
<span class="t" style="left:929.99px;top:646.00px;font-size:17.5px;color:#605e5c;transform:scaleX(1.0638);">Lebla...</span>
<span class="t" style="left:1000.08px;top:646.00px;font-size:17.5px;color:#605e5c;transform:scaleX(1.0261);">Reyer ...</span>
<span class="t" style="left:781.60px;top:692.00px;font-size:13px;color:#252423;transform:scaleX(1.0158);">SALESPERSON YEAR</span>
<span class="t" style="left:184.48px;top:798.00px;font-size:11.5px;color:#333;transform:scaleX(0.9332);">TREATAS #1</span>
<span class="t" style="left:288.17px;top:798.00px;font-size:11.5px;color:#222;transform:scaleX(0.9721);">TREATAS #2</span>
<span class="t" style="left:514.4px;top:544.1px;font-size:13.5px;color:#252423;transform:rotate(-90deg) scaleX(1.048);">Target #2 and Total Sales</span><!--YAXIS-->
</div>
</body></html>
